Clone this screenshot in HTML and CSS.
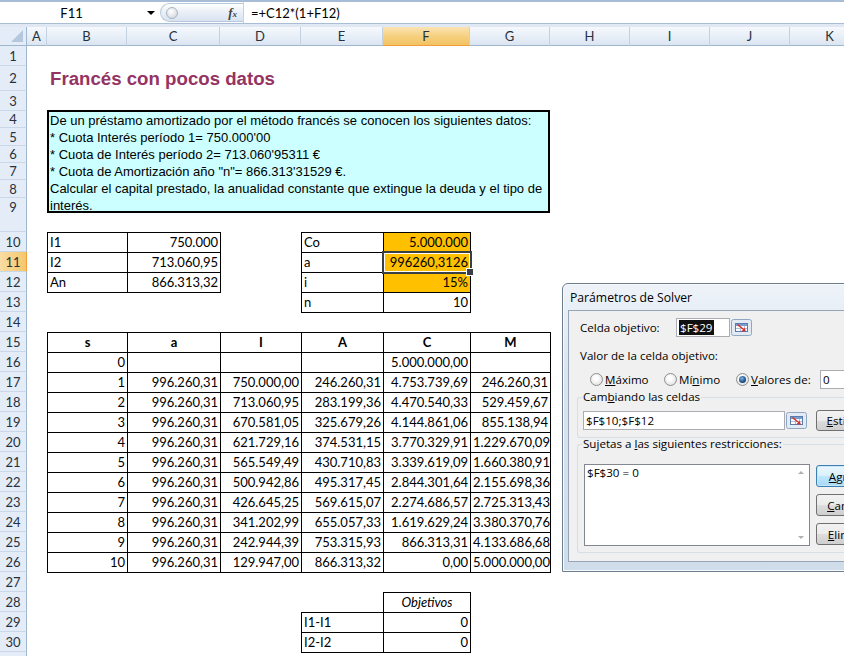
FILE: index.html
```html
<!DOCTYPE html>
<html lang="es">
<head>
<meta charset="utf-8">
<title>Francés con pocos datos</title>
<link rel="stylesheet" href="styles.css">
</head>
<body>
<div class="app">
  <div class="fbar">
    <div class="namebox"><span class="name">F11</span><span class="ddarrow"></span></div>
    <div class="pill"><span class="knob"></span><span class="fx">f<span class="fxs">x</span></span></div>
    <div class="formula">=+C12*(1+F12)</div>
  </div>
  <div class="fgap"></div>
  <div class="sheet">
    <div class="corner"><span class="tri"></span></div>
    <div class="ch">A</div>
    <div class="ch">B</div>
    <div class="ch">C</div>
    <div class="ch">D</div>
    <div class="ch">E</div>
    <div class="ch chsel">F</div>
    <div class="ch">G</div>
    <div class="ch">H</div>
    <div class="ch">I</div>
    <div class="ch">J</div>
    <div class="ch">K</div>

    <div class="rh">1</div>
    <div class="rh">2</div>
    <div class="rh">3</div>
    <div class="rh">4</div>
    <div class="rh">5</div>
    <div class="rh">6</div>
    <div class="rh">7</div>
    <div class="rh">8</div>
    <div class="rh rhtall">9</div>
    <div class="rh">10</div>
    <div class="rh rhsel">11</div>
    <div class="rh">12</div>
    <div class="rh">13</div>
    <div class="rh">14</div>
    <div class="rh">15</div>
    <div class="rh">16</div>
    <div class="rh">17</div>
    <div class="rh">18</div>
    <div class="rh">19</div>
    <div class="rh">20</div>
    <div class="rh">21</div>
    <div class="rh">22</div>
    <div class="rh">23</div>
    <div class="rh">24</div>
    <div class="rh">25</div>
    <div class="rh">26</div>
    <div class="rh">27</div>
    <div class="rh">28</div>
    <div class="rh">29</div>
    <div class="rh">30</div>
    <div class="rh">31</div>

    <div class="p-title">Francés con pocos datos</div>

    <div class="p-box">De un préstamo amortizado por el método francés se conocen los siguientes datos:<br>* Cuota Interés período 1= 750.000'00<br>* Cuota de Interés período 2= 713.060'95311 €<br>* Cuota de Amortización año "n"= 866.313'31529 €.<br>Calcular el capital prestado, la anualidad constante que extingue la deuda y el tipo de<br>interés.</div>

    <div class="tbl t2 p-t1">
      <div class="c">I1</div><div class="c r">750.000</div>
      <div class="c">I2</div><div class="c r">713.060,95</div>
      <div class="c">An</div><div class="c r">866.313,32</div>
    </div>

    <div class="tbl t3 p-t2">
      <div class="c">Co</div><div class="c r org">5.000.000</div>
      <div class="c">a</div><div class="c r org sel">996260,3126</div>
      <div class="c">i</div><div class="c r org">15%</div>
      <div class="c">n</div><div class="c r">10</div>
    </div>

    <div class="tbl t6 p-main">
      <div class="c h">s</div><div class="c h">a</div><div class="c h">I</div><div class="c h">A</div><div class="c h">C</div><div class="c h">M</div>
      <div class="c r">0</div><div class="c r"></div><div class="c r"></div><div class="c r"></div><div class="c r">5.000.000,00</div><div class="c r"></div>
      <div class="c r">1</div><div class="c r">996.260,31</div><div class="c r">750.000,00</div><div class="c r">246.260,31</div><div class="c r">4.753.739,69</div><div class="c r">246.260,31</div>
      <div class="c r">2</div><div class="c r">996.260,31</div><div class="c r">713.060,95</div><div class="c r">283.199,36</div><div class="c r">4.470.540,33</div><div class="c r">529.459,67</div>
      <div class="c r">3</div><div class="c r">996.260,31</div><div class="c r">670.581,05</div><div class="c r">325.679,26</div><div class="c r">4.144.861,06</div><div class="c r">855.138,94</div>
      <div class="c r">4</div><div class="c r">996.260,31</div><div class="c r">621.729,16</div><div class="c r">374.531,15</div><div class="c r">3.770.329,91</div><div class="c r">1.229.670,09</div>
      <div class="c r">5</div><div class="c r">996.260,31</div><div class="c r">565.549,49</div><div class="c r">430.710,83</div><div class="c r">3.339.619,09</div><div class="c r">1.660.380,91</div>
      <div class="c r">6</div><div class="c r">996.260,31</div><div class="c r">500.942,86</div><div class="c r">495.317,45</div><div class="c r">2.844.301,64</div><div class="c r">2.155.698,36</div>
      <div class="c r">7</div><div class="c r">996.260,31</div><div class="c r">426.645,25</div><div class="c r">569.615,07</div><div class="c r">2.274.686,57</div><div class="c r">2.725.313,43</div>
      <div class="c r">8</div><div class="c r">996.260,31</div><div class="c r">341.202,99</div><div class="c r">655.057,33</div><div class="c r">1.619.629,24</div><div class="c r">3.380.370,76</div>
      <div class="c r">9</div><div class="c r">996.260,31</div><div class="c r">242.944,39</div><div class="c r">753.315,93</div><div class="c r">866.313,31</div><div class="c r">4.133.686,68</div>
      <div class="c r">10</div><div class="c r">996.260,31</div><div class="c r">129.947,00</div><div class="c r">866.313,32</div><div class="c r">0,00</div><div class="c r">5.000.000,00</div>
    </div>

    <div class="tbl t3 p-obj">
      <div class="c nob"></div><div class="c it">Objetivos</div>
      <div class="c">I1-I1</div><div class="c r">0</div>
      <div class="c">I2-I2</div><div class="c r">0</div>
    </div>
  </div>

  <div class="dialog">
    <div class="dtitle">Parámetros de Solver</div>
    <div class="client">
      <div class="drow">
        <span class="w96">Celda objetivo:</span>
        <span class="inp w54"><span class="hl">$F$29</span></span>
        <span class="refbtn"><svg width="21" height="17" viewBox="0 0 21 17"><rect x="0.5" y="0.5" width="20" height="16" rx="2" fill="#e2eaf4" stroke="#8ea6c2"/><rect x="4.5" y="4.5" width="12" height="8" fill="#fff" stroke="#5a7bb0"/><rect x="5" y="5" width="11" height="2" fill="#7a9ccf"/><path d="M5 9.5h11M9.5 7v5M13.5 7v5" stroke="#a9bedc"/><path d="M6.5 5.5l5.5 4.5" stroke="#d8312b" stroke-width="1.6"/><path d="M15 12.5l-4.6-0.3 3.1-3.4z" fill="#d8312b"/></svg></span>
      </div>
      <div class="dlabel">Valor de la celda objetivo:</div>
      <div class="radios">
        <span class="ritem w74"><span class="radio"></span><span><u>M</u>áximo</span></span>
        <span class="ritem w72"><span class="radio"></span><span>Mí<u>n</u>imo</span></span>
        <span class="ritem w84"><span class="radio on"></span><span><u>V</u>alores de:</span></span>
        <span class="inp w40">0</span>
      </div>
      <fieldset class="grp g1">
        <legend>Cam<u>b</u>iando las celdas</legend>
        <div class="grow">
          <span class="inp w202">$F$10;$F$12</span>
          <span class="refbtn"><svg width="21" height="17" viewBox="0 0 21 17"><rect x="0.5" y="0.5" width="20" height="16" rx="2" fill="#e2eaf4" stroke="#8ea6c2"/><rect x="4.5" y="4.5" width="12" height="8" fill="#fff" stroke="#5a7bb0"/><rect x="5" y="5" width="11" height="2" fill="#7a9ccf"/><path d="M5 9.5h11M9.5 7v5M13.5 7v5" stroke="#a9bedc"/><path d="M6.5 5.5l5.5 4.5" stroke="#d8312b" stroke-width="1.6"/><path d="M15 12.5l-4.6-0.3 3.1-3.4z" fill="#d8312b"/></svg></span>
          <span class="btn bes"><u>E</u>stimar</span>
        </div>
      </fieldset>
      <fieldset class="grp g2">
        <legend>Sujetas a <u>l</u>as siguientes restricciones:</legend>
        <div class="grow2">
          <div class="listbox">
            <span class="ltext">$F$30 = 0</span>
            <span class="sbar"><span class="aup"></span><span class="adn"></span></span>
          </div>
          <div class="btns">
            <span class="btn bdef"><u>A</u>gregar</span>
            <span class="btn"><u>C</u>ambiar</span>
            <span class="btn"><u>E</u>liminar</span>
          </div>
        </div>
      </fieldset>
    </div>
  </div>
</div>
</body>
</html>
```

FILE: styles.css
```css
* { box-sizing: border-box; }
html, body { margin: 0; padding: 0; }
body {
  width: 844px;
  height: 656px;
  overflow: hidden;
  background: #fff;
  font-family: Lato, "Liberation Sans", sans-serif;
  color: #000;
}
.app {
  position: relative;
  width: 844px;
  height: 656px;
  overflow: hidden;
}

/* formula bar */
.fbar {
  height: 24px;
  display: flex;
  border-top: 2px solid #a7bcd6;
  border-bottom: 1px solid #a9bdd4;
  background: #fff;
}
.namebox {
  width: 160px;
  display: flex;
  align-items: center;
}
.name {
  width: 143px;
  text-align: center;
  font-size: 13px;
}
.ddarrow {
  width: 0;
  height: 0;
  margin-left: 4px;
  border-left: 4px solid transparent;
  border-right: 4px solid transparent;
  border-top: 4px solid #000;
}
.pill {
  width: 83px;
  margin: 1px 0;
  display: flex;
  align-items: center;
  justify-content: space-between;
  border: 1px solid #b9c9dc;
  border-right: none;
  border-radius: 10px 0 0 10px;
  background: linear-gradient(#ffffff, #e9eff7 50%, #d8e3f1);
}
.knob {
  width: 12px;
  height: 12px;
  margin-left: 5px;
  border-radius: 50%;
  border: 1px solid #a9b3bf;
  background: radial-gradient(circle at 40% 35%, #ffffff, #c9d0d9);
}
.fx {
  font-family: "Liberation Serif", serif;
  font-style: italic;
  font-weight: bold;
  font-size: 13px;
  color: #444;
  margin-right: 6px;
}
.fxs { font-size: 9px; }
.formula {
  flex: 1;
  border-left: 1px solid #c6d3e3;
  padding-left: 7px;
  font-size: 13px;
  display: flex;
  align-items: center;
}
.fgap {
  height: 3px;
  background: #dfe8f3;
}

/* sheet */
.sheet {
  display: grid;
  grid-template-columns: 27px 20px 80px 93px 81px 82px 87px 80px 80px 80px 80px 80px;
  grid-template-rows: 19px 20px 25px 20px 17px 18px 17px 17px 18px 34px repeat(22, 20px);
  font-size: 13px;
}
.corner {
  grid-row: 1;
  grid-column: 1;
  background: #e4ecf7;
  border-right: 1px solid #9eb6ce;
  border-bottom: 1px solid #9eb6ce;
  position: relative;
}
.tri {
  position: absolute;
  right: 3px;
  bottom: 3px;
  width: 0;
  height: 0;
  border-left: 12px solid transparent;
  border-bottom: 12px solid #b4c7de;
}
.ch {
  grid-row: 1;
  background: linear-gradient(#f6f9fd, #e7eef7 55%, #dbe5f1);
  border-right: 1px solid #c3d2e3;
  border-bottom: 1px solid #9eb6ce;
  display: flex;
  align-items: center;
  justify-content: center;
  color: #27313b;
}
.chsel {
  background: linear-gradient(#fae3b4, #f6cf7c 55%, #f2c264);
  border-bottom-color: #f29d39;
}
.rh {
  grid-column: 1;
  background: #e4ecf7;
  border-right: 1px solid #9eb6ce;
  border-bottom: 1px solid #c9d7e8;
  display: flex;
  align-items: center;
  justify-content: center;
  color: #27313b;
}
.rhtall {
  align-items: flex-start;
  padding-top: 1px;
  line-height: 17px;
}
.rhsel {
  background: linear-gradient(90deg, #f9dca2, #f4c76c);
  border-right-color: #f29d39;
}

.p-title {
  grid-column: 3 / 8;
  grid-row: 3;
  display: flex;
  align-items: center;
  padding-left: 3px;
  font-family: "Liberation Sans", Arial, sans-serif;
  font-weight: bold;
  font-size: 18.67px;
  color: #953363;
  white-space: nowrap;
}
.p-box {
  grid-column: 3 / 9;
  grid-row: 5 / 11;
  align-self: start;
  margin-top: -1px;
  height: 103px;
  border: 2px solid #000;
  background: #ccffff;
  padding: 0 1px;
  font-family: "Liberation Sans", Arial, sans-serif;
  font-size: 13px;
  line-height: 17px;
  white-space: nowrap;
}

.tbl {
  display: grid;
  grid-auto-rows: 20px;
  justify-self: start;
  align-self: start;
  border-right: 1px solid #000;
  border-bottom: 1px solid #000;
}
.t2 { grid-template-columns: 80px 93px; }
.t3 { grid-template-columns: 82px 87px; }
.t6 { grid-template-columns: 80px 93px 81px 82px 87px 80px; }
.p-t1 { grid-column: 3 / 5; grid-row: 11 / 14; }
.p-t2 { grid-column: 6 / 8; grid-row: 11 / 15; }
.p-main { grid-column: 3 / 9; grid-row: 16 / 28; }
.p-obj { grid-column: 6 / 8; grid-row: 29 / 32; }

.c {
  border-left: 1px solid #000;
  border-top: 1px solid #000;
  padding: 0 2px;
  line-height: 19px;
  white-space: nowrap;
  font-size: 13px;
}
.r { text-align: right; }
.h { font-weight: bold; text-align: center; }
.it { font-style: italic; text-align: center; }
.org { background: #ffc000; }
.nob { border-left-color: transparent; border-top-color: transparent; }
.sel { position: relative; }
.sel::after {
  content: "";
  position: absolute;
  left: -2px;
  top: -2px;
  right: -2px;
  bottom: -2px;
  border: 2px solid #3a3f45;
  box-shadow: inset 0 0 0 1px #fff;
}
.sel::before {
  content: "";
  position: absolute;
  right: -4px;
  bottom: -4px;
  width: 6px;
  height: 6px;
  background: #3a3f45;
  border: 1px solid #fff;
  z-index: 2;
}

/* dialog */
.dialog {
  position: absolute;
  left: 562px;
  top: 283px;
  width: 420px;
  height: 289px;
  border: 1px solid #6e7d8e;
  border-radius: 6px 6px 0 0;
  background: linear-gradient(#eef3f9, #dbe5f0 30%, #cfdcea);
  box-shadow: inset 0 0 0 1px #f7fafd;
  font-family: "Open Sans", "Noto Sans", sans-serif;
  font-size: 11.6px;
  color: #000;
}
.dtitle {
  height: 26px;
  padding-left: 7px;
  display: flex;
  align-items: center;
  font-size: 12.2px;
}
.client {
  margin-left: 5px;
  height: 252px;
  background: #f0f0f0;
  border: 1px solid #95a5b7;
  border-right: none;
  padding: 7px 0 0 11px;
}
.drow {
  display: flex;
  align-items: center;
  height: 19px;
}
.w96 { width: 96px; flex: none; }
.w54 { width: 54px; flex: none; }
.w40 { width: 40px; flex: none; }
.w202 { width: 202px; flex: none; }
.w74 { width: 74px; flex: none; }
.w72 { width: 72px; flex: none; }
.w84 { width: 84px; flex: none; }
.inp {
  height: 19px;
  border: 1px solid #abadb3;
  background: #fff;
  display: flex;
  align-items: center;
  padding: 0 2px;
  white-space: nowrap;
}
.hl {
  background: #111;
  color: #fff;
  padding: 0 1px;
}
.refbtn {
  display: flex;
  flex: none;
  margin-left: 1px;
}
.dlabel {
  margin-top: 11px;
  line-height: 16px;
}
.radios {
  margin-top: 6px;
  height: 19px;
  display: flex;
  align-items: center;
  padding-left: 10px;
}
.ritem {
  display: flex;
  align-items: center;
}
.radio {
  width: 13px;
  height: 13px;
  margin-right: 2px;
  border-radius: 50%;
  border: 1px solid #8e8f8f;
  background: radial-gradient(circle at 45% 40%, #ffffff 20%, #d5d5d5);
  position: relative;
}
.radio.on::after {
  content: "";
  position: absolute;
  left: 2px;
  top: 2px;
  width: 7px;
  height: 7px;
  border-radius: 50%;
  background: radial-gradient(circle at 40% 35%, #7fb2e5, #1c4f86 60%, #0e2c52);
}
.grp {
  margin: 0 0 0 -3px;
  padding: 5px 0 6px 5px;
  border: 1px solid #d5dfe5;
  border-right: none;
  border-radius: 3px 0 0 3px;
  min-width: 0;
}
.grp legend {
  padding: 0 1px;
  margin-left: -1px;
  line-height: 16px;
}
.g2 {
  margin-top: -2px;
  padding-top: 12px;
}
.grow {
  display: flex;
  align-items: center;
  height: 21px;
}
.btn {
  flex: none;
  height: 21px;
  border: 1px solid #707070;
  border-radius: 3px;
  background: linear-gradient(#f2f2f2, #ebebeb 50%, #dddddd 51%, #cfcfcf);
  display: flex;
  align-items: center;
  justify-content: center;
  white-space: nowrap;
}
.bes {
  margin-left: 9px;
  width: 62px;
}
.grow2 {
  display: flex;
  align-items: flex-start;
}
.listbox {
  flex: none;
  margin-left: 1px;
  width: 226px;
  height: 82px;
  border: 1px solid #828790;
  background: #fff;
  display: flex;
  justify-content: space-between;
}
.ltext {
  padding: 0 0 0 2px;
  line-height: 16px;
}
.sbar {
  width: 17px;
  display: flex;
  flex-direction: column;
  justify-content: space-between;
  align-items: center;
  padding: 6px 0 6px;
}
.aup {
  width: 0;
  height: 0;
  border-left: 3px solid transparent;
  border-right: 3px solid transparent;
  border-bottom: 3px solid #b0b0b0;
}
.adn {
  width: 0;
  height: 0;
  border-left: 3px solid transparent;
  border-right: 3px solid transparent;
  border-top: 3px solid #b0b0b0;
}
.btns {
  flex: none;
  margin-left: 6px;
  margin-top: 1px;
  display: flex;
  flex-direction: column;
  gap: 7px;
}
.btns .btn {
  width: 68px;
  height: 22px;
}
.bdef {
  border-color: #3c7fb1;
  background: linear-gradient(#eaf6fd, #d9f0fc 50%, #bee6fd 51%, #a7d9f5);
  box-shadow: inset 0 0 0 1px #c7e6f8;
}
```
